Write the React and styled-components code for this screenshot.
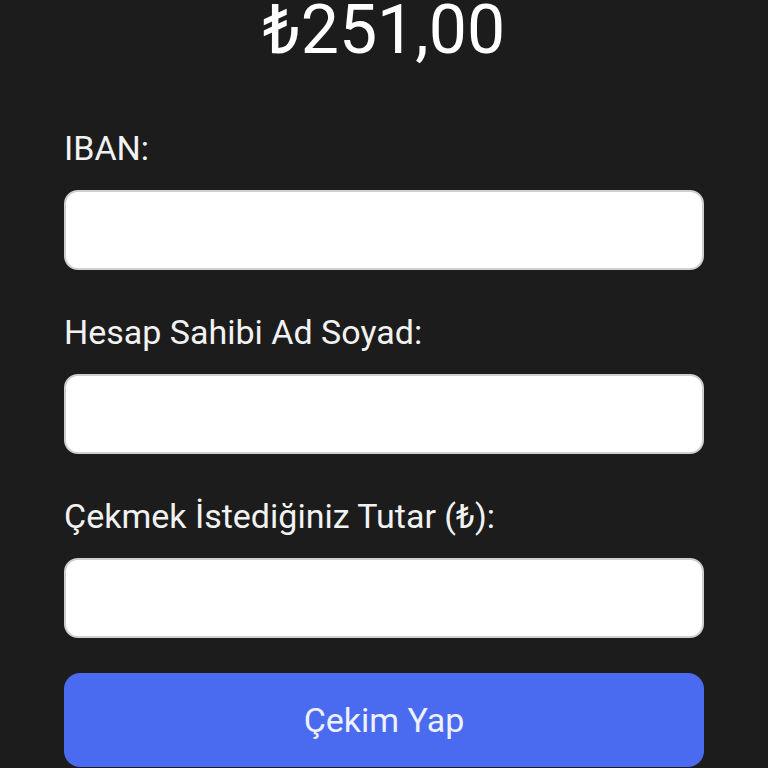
import React from "react";
import styled, { createGlobalStyle } from "styled-components";

const GlobalStyle = createGlobalStyle`
  html, body {
    margin: 0;
    padding: 0;
    background: #1c1c1c;
  }
  body {
    font-family: Roboto, "Liberation Sans", sans-serif;
    color: #ffffff;
    overflow: hidden;
  }
`;

const Page = styled.div`
  width: 768px;
  height: 768px;
  box-sizing: border-box;
  padding: 0 64px;
  background: #1c1c1c;
  overflow: hidden;
`;

const Amount = styled.h1`
  margin: -10px 0 0;
  font-size: 68px;
  line-height: 80px;
  font-weight: 400;
  text-align: center;
  color: #ffffff;
`;

const Form = styled.form`
  display: flex;
  flex-direction: column;
  margin-top: 58px;
`;

const Field = styled.div`
  display: flex;
  flex-direction: column;
  gap: 22px;
  margin-bottom: 42px;
`;

const Label = styled.label`
  font-size: 34px;
  line-height: 40px;
  color: #f2f2f2;
`;

const Input = styled.input`
  height: 80px;
  box-sizing: border-box;
  border: 2px solid #cfcfcf;
  border-radius: 14px;
  background: #ffffff;
  font-size: 28px;
  padding: 0 20px;
  outline: none;
`;

const Button = styled.button`
  height: 94px;
  margin-top: -7px;
  border: none;
  border-radius: 16px;
  background: #4a6bf0;
  color: #eef1ff;
  font-family: Roboto, "Liberation Sans", sans-serif;
  font-size: 34px;
  cursor: pointer;
`;

const fields = [
  { id: "iban", label: "IBAN:" },
  { id: "name", label: "Hesap Sahibi Ad Soyad:" },
  { id: "amount", label: "Çekmek İstediğiniz Tutar (₺):" },
];

export default function App() {
  return (
    <>
      <GlobalStyle />
      <Page>
        <Amount>₺251,00</Amount>
        <Form onSubmit={(e) => e.preventDefault()}>
          {fields.map((f) => (
            <Field key={f.id}>
              <Label htmlFor={f.id}>{f.label}</Label>
              <Input id={f.id} type="text" />
            </Field>
          ))}
          <Button type="submit">Çekim Yap</Button>
        </Form>
      </Page>
    </>
  );
}
